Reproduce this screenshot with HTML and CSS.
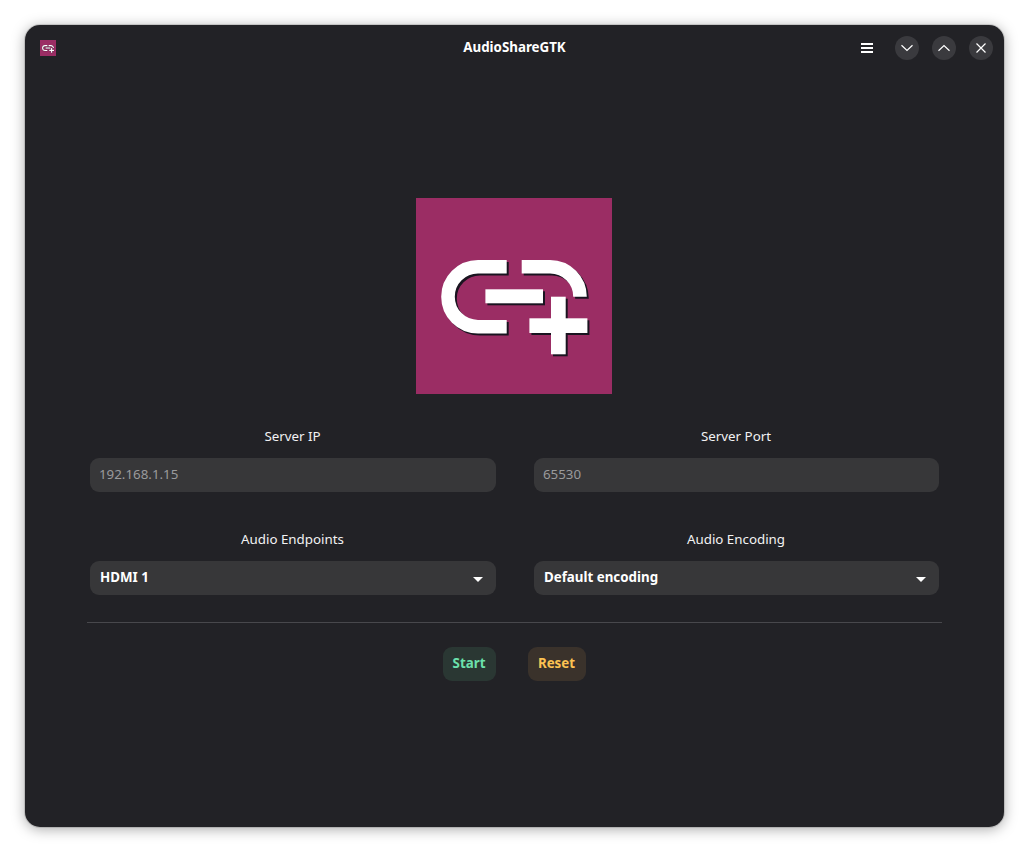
FILE: index.html
```html
<!DOCTYPE html>
<html lang="en">
<head>
<meta charset="utf-8">
<title>AudioShareGTK</title>
<link rel="stylesheet" href="styles.css">
</head>
<body>
<svg class="defs" width="0" height="0" aria-hidden="true">
  <defs>
    <g id="logo-mark">
      <rect width="196" height="196" fill="#9b2d64"/>
      <g class="mark-shadow">
        <g fill="none" stroke="#fff" stroke-width="13.6">
          <path d="M90.7 68.7H62a30 30 0 0 0 0 60h28.7"/>
          <path d="M105.7 68.7H134a30 30 0 0 1 30 30"/>
        </g>
        <g fill="#fff">
          <rect x="69.4" y="91.3" width="57.6" height="14"/>
          <rect x="113.4" y="120.3" width="58" height="14.7"/>
          <rect x="135" y="98.7" width="14.7" height="57.6"/>
        </g>
      </g>
    </g>
  </defs>
</svg>
<main class="window">
  <header class="titlebar">
    <div class="titlebar-start">
      <svg class="app-icon" viewBox="0 0 196 196"><use href="#logo-mark"/></svg>
    </div>
    <h1 class="title">AudioShareGTK</h1>
    <div class="titlebar-end">
      <button class="menu-button" aria-label="Menu">
        <svg width="12" height="10" viewBox="0 0 12 10"><path fill="#fff" d="M0 0h12v2H0zM0 4h12v2H0zM0 8h12v2H0z"/></svg>
      </button>
      <button class="win-button" aria-label="Minimize">
        <svg width="12" height="8" viewBox="0 0 12 8"><path class="win-glyph" d="M.5 1.2 6 6.5l5.500-5.300"/></svg>
      </button>
      <button class="win-button" aria-label="Maximize">
        <svg width="12" height="8" viewBox="0 0 12 8"><path class="win-glyph" d="M.5 6.800 6 1.500l5.500 5.300"/></svg>
      </button>
      <button class="win-button" aria-label="Close">
        <svg width="10" height="10" viewBox="0 0 10 10"><path class="win-glyph" d="M.5.500l9 9M9.500.500l-9 9"/></svg>
      </button>
    </div>
  </header>
  <section class="content">
    <svg class="logo" viewBox="0 0 196 196"><use href="#logo-mark"/></svg>
    <div class="form-grid">
      <div class="field">
        <label class="field-label">Server IP</label>
        <div class="entry">192.168.1.15</div>
      </div>
      <div class="field">
        <label class="field-label">Server Port</label>
        <div class="entry">65530</div>
      </div>
      <div class="field">
        <label class="field-label">Audio Endpoints</label>
        <div class="dropdown"><span>HDMI 1</span><i class="caret"></i></div>
      </div>
      <div class="field">
        <label class="field-label">Audio Encoding</label>
        <div class="dropdown"><span>Default encoding</span><i class="caret"></i></div>
      </div>
    </div>
    <hr class="separator">
    <div class="actions">
      <button class="action action-start">Start</button>
      <button class="action action-reset">Reset</button>
    </div>
  </section>
</main>
</body>
</html>
```
FILE: styles.css
```css
* { box-sizing: border-box; }
html, body { margin: 0; height: 100%; }
body {
  width: 1029px;
  height: 852px;
  padding: 25px;
  background: #fff;
  overflow: hidden;
  font-family: "Noto Sans", sans-serif;
  color: #fff;
}
.defs { display: block; height: 0; width: 0; overflow: hidden; }
.mark-shadow { filter: drop-shadow(2px 2px 0.6px #1a1420); }
.window {
  width: 979px;
  height: 802px;
  background: #222226;
  border-radius: 15px;
  box-shadow: 0 2px 14px rgba(0, 0, 0, 0.35), 0 0 0 1px rgba(0, 0, 0, 0.12);
  display: flex;
  flex-direction: column;
}
.titlebar {
  display: grid;
  grid-template-columns: 1fr auto 1fr;
  align-items: center;
  height: 46px;
  padding: 0 11px;
}
.app-icon { display: block; width: 16px; height: 16px; margin-left: 4px; }
.title {
  margin: 0;
  font-size: 13.33px;
  font-weight: 700;
  line-height: 20px;
  position: relative;
  top: -1px;
}
.titlebar-end {
  display: flex;
  justify-content: flex-end;
  align-items: center;
  gap: 13px;
}
.menu-button, .win-button {
  display: flex;
  align-items: center;
  justify-content: center;
  border: 0;
  padding: 0;
}
.menu-button { width: 24px; height: 24px; background: transparent; margin-right: 3px; }
.win-button { width: 24px; height: 24px; border-radius: 50%; background: #3a3a3e; }
.win-glyph { fill: none; stroke: #fff; stroke-width: 1.2; }
.content {
  display: flex;
  flex-direction: column;
  align-items: center;
  padding-top: 127px;
}
.logo { display: block; width: 196px; height: 196px; margin-left: -1px; }
.form-grid {
  display: grid;
  grid-template-columns: 406px 405px;
  column-gap: 38px;
  row-gap: 36px;
  margin-top: 31px;
}
.field { display: flex; flex-direction: column; align-items: stretch; }
.field-label {
  font-size: 13.33px;
  line-height: 22px;
  height: 22px;
  margin-bottom: 11px;
  padding-right: 1px;
  text-align: center;
  color: #f2f2f3;
}
.entry, .dropdown {
  height: 34px;
  border-radius: 9px;
  background: #373739;
  font-size: 13.33px;
  line-height: 33px;
}
.entry { padding: 0 9px; color: #9a9a9c; }
.dropdown {
  display: flex;
  align-items: center;
  justify-content: space-between;
  padding: 0 13px 2px 10px;
  font-weight: 700;
}
.caret {
  width: 0;
  height: 0;
  border-left: 5px solid transparent;
  border-right: 5px solid transparent;
  border-top: 5px solid #fff;
  margin-top: 4px;
}
.separator {
  width: 855px;
  height: 1px;
  margin: 27px 0 24px;
  border: 0;
  background: #48484c;
}
.actions { display: flex; gap: 32px; }
.action {
  height: 34px;
  padding: 0 1px 2px 0;
  border: 0;
  border-radius: 9px;
  font-family: inherit;
  font-size: 13.33px;
  font-weight: 700;
}
.action-start { width: 53px; background: #2a3733; color: #6ce0ac; }
.action-reset { width: 58px; background: #3a322b; color: #fcc252; }
```
